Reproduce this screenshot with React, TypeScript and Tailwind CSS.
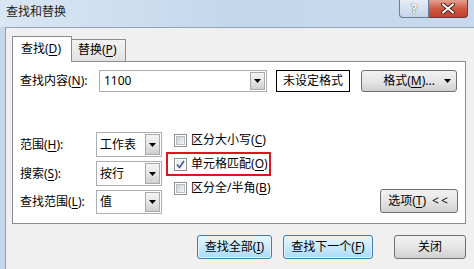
import type { ReactNode } from "react";

function Key({ children }: { children: ReactNode }) {
  return <span className="underline underline-offset-[2px] decoration-1">{children}</span>;
}

function DropArrow() {
  return (
    <svg width="7" height="4" viewBox="0 0 7 4">
      <path d="M0 0h7L3.5 4z" fill="#000" />
    </svg>
  );
}

function ArrowBox() {
  return (
    <div className="flex h-full w-[15px] items-center justify-center border border-[#a9a9a9] bg-linear-to-b from-[#f4f4f4] via-[#e6e6e6] to-[#cfcfcf]">
      <DropArrow />
    </div>
  );
}

function Select({ value, tall }: { value: string; tall?: boolean }) {
  return (
    <div
      className={
        tall
          ? "flex h-[25px] w-[66px] items-center border border-[#abadb3] bg-white p-[1px] pl-[3px]"
          : "flex h-[24px] w-[66px] items-center border border-[#abadb3] bg-white p-[1px] pl-[3px]"
      }
    >
      <span className="flex-1 leading-none">{value}</span>
      <ArrowBox />
    </div>
  );
}

function Check({ checked }: { checked?: boolean }) {
  return (
    <div className="flex h-[13px] w-[13px] shrink-0 items-center justify-center border border-[#8e8f8f] bg-white p-[1px]">
      {checked ? (
        <div className="flex h-full w-full items-center justify-center bg-linear-to-br from-[#e9ebee] to-[#fbfbfb]">
          <svg width="9" height="9" viewBox="0 0 9 9">
            <path d="M1 4.5 L3.5 7.5 L8 1" fill="none" stroke="#3d5a8f" strokeWidth="1.6" />
          </svg>
        </div>
      ) : (
        <div className="h-full w-full border border-[#b9bcc0] bg-linear-to-br from-[#cdd0d4] to-[#f4f4f4]" />
      )}
    </div>
  );
}

function CheckRow({ label, k, tail, checked }: { label: string; k: string; tail?: string; checked?: boolean }) {
  return (
    <div
      className={
        checked
          ? "flex h-[24px] w-[105px] items-center gap-[4px] border-2 border-[#e0141e] pl-[6px]"
          : "flex h-[24px] w-[105px] items-center gap-[4px] border-2 border-transparent pl-[6px]"
      }
    >
      <Check checked={checked} />
      <span className="whitespace-nowrap leading-none">
        {label}(<Key>{k}</Key>){tail}
      </span>
    </div>
  );
}

const grayBtn =
  "flex items-center justify-center rounded-[3px] border border-[#707070] bg-linear-to-b from-[#f2f2f2] via-[#e6e6e6] to-[#d0d0d0] leading-none";
const blueBtn =
  "flex items-center justify-center rounded-[3px] border border-[#3c7fb1] bg-linear-to-b from-[#eaf6fd] via-[#c9e9fc] to-[#a9dbf6] leading-none shadow-[inset_0_0_0_1px_#e4f4fd]";

export default function App() {
  return (
    <div className="flex h-[269px] w-[474px] flex-col overflow-hidden bg-[#c5d7eb] font-['Noto_Sans','Noto_Sans_CJK_SC',sans-serif] text-[12px] text-black">
      {/* title bar */}
      <div className="flex h-[27px] items-start bg-linear-to-r from-[#d9e6f3] via-[#c3d7ec] to-[#c9daee]">
        <span className="pl-[6px] pt-[6px] leading-none text-[#1e1e1e]">查找和替换</span>
        <div className="ml-auto mr-[6px] flex">
          <div className="flex h-[18px] w-[30px] items-center justify-center rounded-bl-[4px] border border-t-0 border-[#6c7c92] bg-linear-to-b from-[#e6eef7] to-[#c3d3e6] text-[13px] font-bold leading-none text-white [text-shadow:0_0_1px_#3f4e64,0_0_1px_#3f4e64]">
            ?
          </div>
          <div className="flex h-[18px] w-[39px] items-center justify-center rounded-br-[4px] border border-l-0 border-t-0 border-[#6c3a3a] bg-linear-to-b from-[#e3a08f] via-[#cf5a44] to-[#c2402d]">
            <svg width="14" height="11" viewBox="0 0 14 11">
              <path d="M2 1.5 L12 9.5 M12 1.5 L2 9.5" stroke="#4a1d18" strokeWidth="4" strokeLinecap="round" />
              <path d="M2 1.5 L12 9.5 M12 1.5 L2 9.5" stroke="#fff" strokeWidth="2.2" strokeLinecap="round" />
            </svg>
          </div>
        </div>
      </div>

      {/* client area */}
      <div className="ml-[5px] flex flex-1 flex-col border-l border-t border-[#93a3b6] bg-[#f0f0f0] pl-[6px] pt-[8px]">
        {/* tabs */}
        <div className="flex h-[25px] items-end">
          <div className="relative z-10 mb-[-1px] flex h-[26px] w-[60px] items-start border border-b-0 border-[#898c95] bg-white pl-[8px] pt-[6px] leading-none">
            查找(<Key>D</Key>)
          </div>
          <div className="flex h-[22px] w-[54px] items-start border border-b-0 border-l-0 border-[#898c95] bg-linear-to-b from-[#f3f3f3] to-[#e2e2e2] pl-[6px] pt-[4px] leading-none">
            替换(<Key>P</Key>)
          </div>
        </div>

        {/* panel */}
        <div className="flex h-[163px] w-[454px] flex-col border border-[#898c95] bg-white pl-[7px] pr-[7px] pt-[8px]">
          <div className="flex h-[22px] items-center">
            <span className="w-[79px] leading-none">
              查找内容(<Key>N</Key>):
            </span>
            <div className="flex h-[22px] w-[168px] items-center border border-[#abadb3] p-[1px] pl-[4px]">
              <span className="flex-1 leading-none">1100</span>
              <ArrowBox />
            </div>
            <div className="ml-[9px] flex h-[22px] w-[74px] items-center justify-center border border-black leading-none">
              未设定格式
            </div>
            <div className={grayBtn + " relative ml-[11px] h-[22px] w-[96px]"}>
              <span>
                格式(<Key>M</Key>)...
              </span>
              <div className="absolute right-[5px] top-[8px]">
                <DropArrow />
              </div>
            </div>
          </div>

          <div className="mt-[40px] flex">
            <div className="flex flex-col gap-[4px]">
              <div className="flex items-center">
                <span className="w-[76px] leading-none">
                  范围(<Key>H</Key>):
                </span>
                <Select value="工作表" tall />
              </div>
              <div className="flex items-center">
                <span className="w-[76px] leading-none">
                  搜索(<Key>S</Key>):
                </span>
                <Select value="按行" tall />
              </div>
              <div className="flex items-center">
                <span className="w-[76px] leading-none">
                  查找范围(<Key>L</Key>):
                </span>
                <Select value="值" />
              </div>
            </div>

            <div className="ml-[4px] mt-[-4px] flex flex-col">
              <CheckRow label="区分大小写" k="C" />
              <CheckRow label="单元格匹配" k="O" checked />
              <CheckRow label="区分全/半角" k="B" />
            </div>

            <div className="ml-auto flex items-end pb-[1px]">
              <div className={grayBtn + " h-[24px] w-[78px] gap-[6px]"}>
                <span>
                  选项(<Key>T</Key>)
                </span>
                <span className="tracking-[2px]">&lt;&lt;</span>
              </div>
            </div>
          </div>
        </div>

        {/* bottom buttons */}
        <div className="mt-[11px] flex w-[454px] justify-end">
          <div className={blueBtn + " h-[24px] w-[75px]"}>
            查找全部(<Key>I</Key>)
          </div>
          <div className={blueBtn + " ml-[11px] h-[24px] w-[90px]"}>
            查找下一个(<Key>F</Key>)
          </div>
          <div className={grayBtn + " ml-[21px] h-[24px] w-[72px]"}>关闭</div>
        </div>
      </div>
    </div>
  );
}
